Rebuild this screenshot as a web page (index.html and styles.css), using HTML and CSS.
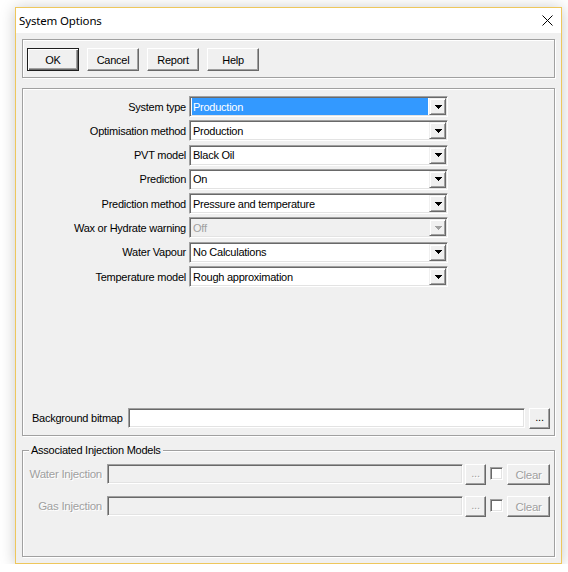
FILE: index.html
```html
<!DOCTYPE html>
<html>
<head>
<meta charset="utf-8">
<title>System Options</title>
<link rel="stylesheet" href="styles.css">
</head>
<body>
<div class="window">
  <div class="titlebar">
    <span class="title">System Options</span>
    <span class="close"><svg width="11" height="11" viewBox="0 0 11 11"><path d="M0.5 0.5L10.5 10.5M10.5 0.5L0.5 10.5" stroke="#000" stroke-width="1"/></svg></span>
  </div>
  <div class="client">
    <div class="group top-group">
      <div class="btn default">OK</div>
      <div class="btn">Cancel</div>
      <div class="btn">Report</div>
      <div class="btn">Help</div>
    </div>

    <div class="group main-group">
      <div class="form-grid">
        <span class="lbl">System type</span>
        <div class="combo"><span class="value selected">Production</span><span class="drop"><svg width="7" height="4"><path d="M0 0h7v1h-1v1h-1v1h-1v1h-1v-1h-1v-1h-1v-1h-1z"/></svg></span></div>

        <span class="lbl">Optimisation method</span>
        <div class="combo"><span class="value">Production</span><span class="drop"><svg width="7" height="4"><path d="M0 0h7v1h-1v1h-1v1h-1v1h-1v-1h-1v-1h-1v-1h-1z"/></svg></span></div>

        <span class="lbl">PVT model</span>
        <div class="combo"><span class="value">Black Oil</span><span class="drop"><svg width="7" height="4"><path d="M0 0h7v1h-1v1h-1v1h-1v1h-1v-1h-1v-1h-1v-1h-1z"/></svg></span></div>

        <span class="lbl">Prediction</span>
        <div class="combo"><span class="value">On</span><span class="drop"><svg width="7" height="4"><path d="M0 0h7v1h-1v1h-1v1h-1v1h-1v-1h-1v-1h-1v-1h-1z"/></svg></span></div>

        <span class="lbl">Prediction method</span>
        <div class="combo"><span class="value">Pressure and temperature</span><span class="drop"><svg width="7" height="4"><path d="M0 0h7v1h-1v1h-1v1h-1v1h-1v-1h-1v-1h-1v-1h-1z"/></svg></span></div>

        <span class="lbl">Wax or Hydrate warning</span>
        <div class="combo disabled"><span class="value">Off</span><span class="drop"><svg width="7" height="4"><path d="M0 0h7v1h-1v1h-1v1h-1v1h-1v-1h-1v-1h-1v-1h-1z"/></svg></span></div>

        <span class="lbl">Water Vapour</span>
        <div class="combo"><span class="value">No Calculations</span><span class="drop"><svg width="7" height="4"><path d="M0 0h7v1h-1v1h-1v1h-1v1h-1v-1h-1v-1h-1v-1h-1z"/></svg></span></div>

        <span class="lbl">Temperature model</span>
        <div class="combo"><span class="value">Rough approximation</span><span class="drop"><svg width="7" height="4"><path d="M0 0h7v1h-1v1h-1v1h-1v1h-1v-1h-1v-1h-1v-1h-1z"/></svg></span></div>
      </div>

      <div class="bitmap-row">
        <span class="bitmap-lbl">Background bitmap</span>
        <div class="edit bitmap-edit"></div>
        <div class="btn small">...</div>
      </div>
    </div>

    <div class="group inj-group">
      <span class="legend">Associated Injection Models</span>
      <div class="inj-row">
        <span class="inj-lbl">Water Injection</span>
        <div class="edit disabled inj-edit"></div>
        <div class="btn small dis">...</div>
        <span class="check"></span>
        <div class="btn clear dis">Clear</div>
      </div>
      <div class="inj-row">
        <span class="inj-lbl">Gas Injection</span>
        <div class="edit disabled inj-edit"></div>
        <div class="btn small dis">...</div>
        <span class="check"></span>
        <div class="btn clear dis">Clear</div>
      </div>
    </div>
  </div>
</div>
</body>
</html>
```
FILE: styles.css
```css
html, body {
  margin: 0;
  background: #ffffff;
}

body {
  padding: 7px 0 0 15px;
  font-family: "Liberation Sans", Arial, sans-serif;
  font-size: 11px;
  letter-spacing: -0.25px;
  color: #000;
}

.window {
  box-sizing: border-box;
  width: 547px;
  height: 557px;
  border: 1px solid #eec75c;
  box-shadow: 0 1px 14px rgba(0, 0, 0, 0.22);
  display: flex;
  flex-direction: column;
  background: #f0f0f0;
}

.titlebar {
  height: 25px;
  background: #ffffff;
  display: flex;
  align-items: center;
  justify-content: space-between;
  padding: 0 8px 0 3px;
}

.title {
  font-family: "Noto Sans", "Open Sans", sans-serif;
  font-size: 11.5px;
  letter-spacing: -0.15px;
  color: #000;
}

.close {
  display: flex;
  width: 11px;
  height: 11px;
}

.client {
  flex: 1;
  background: #f0f0f0;
  padding: 6px 0 0 6px;
}

/* etched group frame */
.group {
  box-sizing: border-box;
  width: 533px;
  border: 1px solid #a0a0a0;
  box-shadow: inset 1px 1px 0 #ffffff, 1px 1px 0 #ffffff;
}

.top-group {
  height: 39px;
  display: flex;
  gap: 8px;
  padding: 8px 0 0 4px;
}

/* raised push button */
.btn {
  box-sizing: border-box;
  flex: none;
  width: 52px;
  height: 23px;
  background: #f0f0f0;
  border: 1px solid;
  border-color: #ffffff #696969 #696969 #ffffff;
  box-shadow: inset -1px -1px 0 #a0a0a0, inset 1px 1px 0 #f0f0f0;
  display: flex;
  align-items: center;
  justify-content: center;
}

.btn.default {
  border: 1px solid #1e1e1e;
  box-shadow: inset 1px 1px 0 #ffffff, inset -1px -1px 0 #696969, inset -2px -2px 0 #a0a0a0;
}

.btn.small {
  width: 21px;
  height: 21px;
  align-items: flex-end;
  padding-bottom: 5px;
}

.btn.clear {
  width: 43px;
  height: 21px;
  font-size: 11.5px;
}

.btn.dis {
  color: #a0a0a0;
  text-shadow: 1px 1px 0 #ffffff;
}

.main-group {
  margin-top: 10px;
  height: 348px;
  display: flex;
  flex-direction: column;
  padding: 7px 0 6px 0;
}

.form-grid {
  display: grid;
  grid-template-columns: 163px 259px;
  grid-auto-rows: 21px;
  column-gap: 3px;
  row-gap: 3.3px;
}

.lbl {
  text-align: right;
  align-self: center;
  white-space: nowrap;
}

/* sunken combo box */
.combo {
  box-sizing: border-box;
  height: 21px;
  background: #ffffff;
  border: 1px solid;
  border-color: #a0a0a0 #ffffff #ffffff #a0a0a0;
  box-shadow: inset 1px 1px 0 #696969, inset -1px -1px 0 #e3e3e3;
  padding: 1px;
  display: flex;
}

.combo .value {
  flex: 1;
  margin: 0 1px;
  padding-left: 1px;
  display: flex;
  align-items: center;
  white-space: nowrap;
}

.combo .value.selected {
  background: #3399ff;
  color: #ffffff;
}

.combo .drop {
  box-sizing: border-box;
  width: 17px;
  height: 17px;
  background: #f0f0f0;
  border: 1px solid;
  border-color: #f0f0f0 #696969 #696969 #f0f0f0;
  box-shadow: inset 1px 1px 0 #ffffff, inset -1px -1px 0 #a0a0a0;
  display: flex;
  align-items: center;
  justify-content: center;
}

.combo .drop svg {
  fill: #000;
  margin-left: 1px;
}

.combo.disabled {
  background: #f0f0f0;
}

.combo.disabled .value {
  color: #a0a0a0;
}

.combo.disabled .drop svg {
  fill: #a0a0a0;
}

/* sunken edit box */
.edit {
  box-sizing: border-box;
  flex: none;
  height: 20px;
  background: #ffffff;
  border: 1px solid;
  border-color: #a0a0a0 #ffffff #ffffff #a0a0a0;
  box-shadow: inset 1px 1px 0 #696969, inset -1px -1px 0 #e3e3e3;
}

.edit.disabled {
  background: #f0f0f0;
}

.bitmap-row {
  margin-top: auto;
  display: flex;
  align-items: flex-start;
  padding-left: 9px;
}

.bitmap-lbl {
  width: 96px;
  height: 20px;
  line-height: 20px;
  white-space: nowrap;
}

.bitmap-edit {
  width: 397px;
  margin-right: 4px;
}

.inj-group {
  position: relative;
  margin-top: 14px;
  height: 107px;
  padding-top: 13px;
  display: flex;
  flex-direction: column;
  gap: 11px;
}

.legend {
  position: absolute;
  top: -8px;
  left: 6px;
  padding: 0 2px;
  background: #f0f0f0;
  line-height: 14px;
  white-space: nowrap;
}

.inj-row {
  display: flex;
  align-items: flex-start;
  height: 21px;
}

.inj-lbl {
  width: 79px;
  padding-right: 2px;
  text-align: right;
  height: 20px;
  line-height: 20px;
  white-space: nowrap;
  color: #a0a0a0;
  text-shadow: 1px 1px 0 #ffffff;
  font-size: 11.5px;
}

.inj-edit {
  width: 356px;
  margin-left: 3px;
  margin-right: 2px;
}

.check {
  box-sizing: border-box;
  flex: none;
  width: 13px;
  height: 13px;
  margin: 3px 4px 0 4px;
  background: #ffffff;
  border: 1px solid;
  border-color: #a0a0a0 #ffffff #ffffff #a0a0a0;
  box-shadow: inset 1px 1px 0 #696969, inset -1px -1px 0 #e3e3e3;
}
```
